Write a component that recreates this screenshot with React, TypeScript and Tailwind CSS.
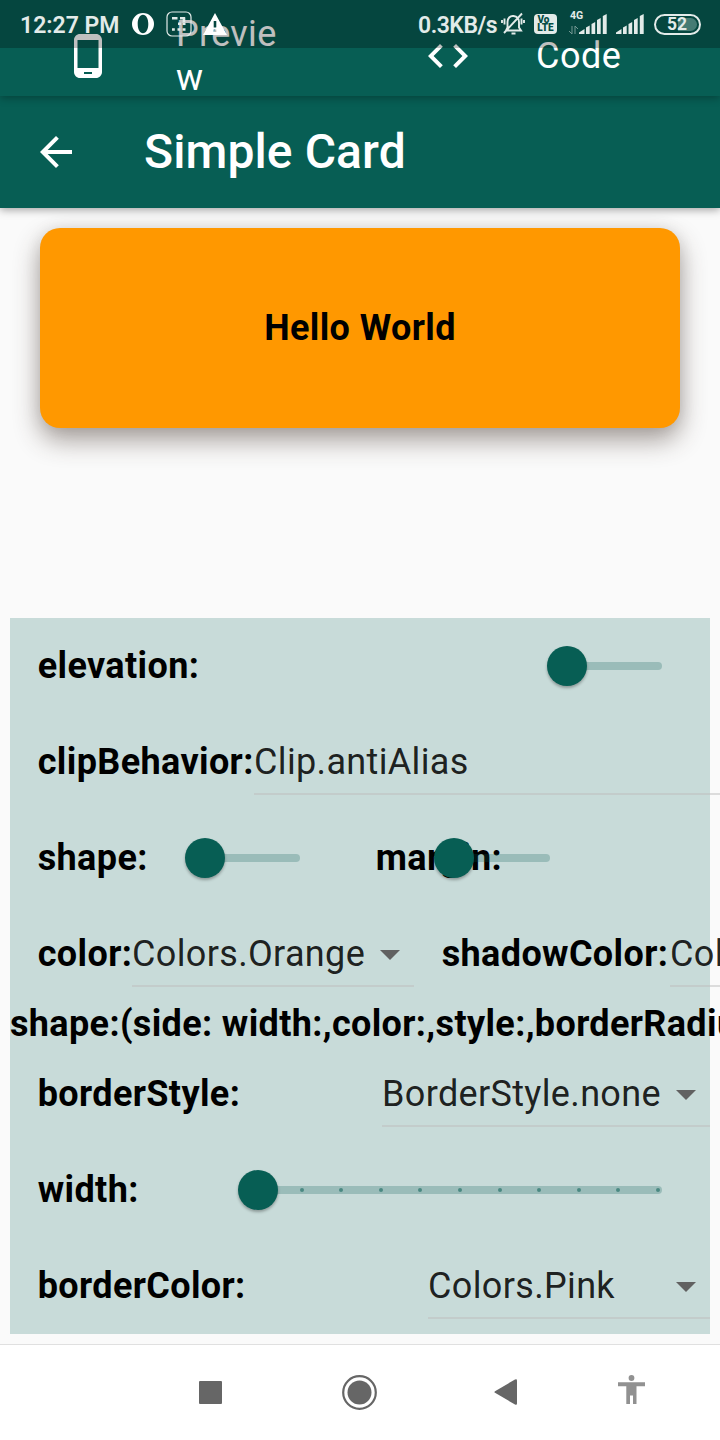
import type { ReactNode } from "react";
import { MdArrowBack, MdArrowDropDown, MdCode, MdPhoneAndroid } from "react-icons/md";

function Label({ children }: { children: ReactNode }) {
  return <span className="-ml-[0.3px] shrink-0 font-bold tracking-[0.38px] text-black">{children}</span>;
}

function Dropdown({ value, className }: { value: string; className: string }) {
  return (
    <div className={`flex h-[66px] shrink-0 items-center justify-between border-b-2 border-[#bdbdbd]/50 pt-0.5 ${className}`}>
      <span className="tracking-[0.35px] text-black/87">{value}</span>
      <MdArrowDropDown className="size-12 shrink-0 text-[#616161]" />
    </div>
  );
}

function Slider({ className, ticks = 0 }: { className: string; ticks?: number }) {
  return (
    <div className={`flex h-10 shrink-0 items-center ${className}`}>
      <div className="z-10 size-10 shrink-0 rounded-full bg-[#075e54] shadow-[0_2px_3px_rgba(0,0,0,0.3)]" />
      <div className="-ml-1 flex h-2 grow items-center justify-between rounded-r-full bg-[#075e54]/24 pl-[25.6px] pr-0.5">
        {Array.from({ length: ticks }, (_, i) => (
          <span key={i} className="size-1 rounded-full bg-[#075e54]/54" />
        ))}
      </div>
    </div>
  );
}

function Row({ children }: { children: ReactNode }) {
  return <div className="flex h-24 items-center pl-7">{children}</div>;
}

function Signal({ className }: { className: string }) {
  return (
    <svg viewBox="0 0 28 20" className={className} fill="currentColor">
      <path d="M0 20v-1.500L5.500 15v5zM7 20v-6.500l3.700-2V20zM12.500 20V10l3.700-2v12zM18 20V6l3.700-2v16zM23.800 20V2L27.700 0v20z" />
    </svg>
  );
}

function StatusBar() {
  return (
    <div className="absolute inset-x-0 top-0 z-30 flex h-12 items-center bg-black/25 pl-5 text-[#e3ebe9]">
      <span className="w-[112px] shrink-0 pt-[3px] text-[23px] leading-none font-semibold">12:27 PM</span>
      <svg viewBox="0 0 22 22" className="size-[22px] shrink-0 text-white" fill="currentColor">
        <path fillRule="evenodd" d="M11 0a11 11 0 1 0 0 22 11 11 0 0 0 0-22zm0 1.800c3.200 0 5.300 4 5.300 9.200s-2.100 9.200-5.300 9.200S5.700 16.200 5.700 11 7.800 1.800 11 1.800z" />
      </svg>
      <svg viewBox="0 0 26 26" className="ml-[12px] size-[26px] shrink-0" fill="none" stroke="currentColor">
        <rect x="1" y="1" width="24" height="24" rx="5" strokeWidth="1.200" />
        <path strokeWidth="2.600" d="M6 7.200h5.500M14 7.200h5.200M18 7v4M12 12.800h2.800M16.500 12.800h3M6 18.500h2.800M11.500 18.500h2.800M16.500 18.500h3" />
      </svg>
      <svg viewBox="0 0 24 22" className="ml-[11px] h-[22px] w-6 shrink-0" fill="white">
        <path fillRule="evenodd" d="M12 0l12 22H0zM10.700 8v6.500h2.600V8zm0 8.500v2.600h2.600v-2.600z" />
      </svg>
      <span className="ml-[191px] w-[83px] shrink-0 pt-[3px] text-[23px] leading-none font-semibold tracking-[-0.5px]">0.3KB/s</span>
      <svg viewBox="0 0 24 24" className="size-6 shrink-0" fill="none" stroke="currentColor" strokeWidth="1.900">
        <path d="M5 18.500h15l-2-3V10c0-3-2-5.500-5.500-6C9 3.500 6.500 6.500 6.500 10v5.500zM10.500 21.500h4M21 1.500L3 21M3.500 6.500v6M1 8v3M20.500 6.500v6M23 8v3" />
      </svg>
      <div className="ml-[9px] flex h-5 w-[23px] shrink-0 flex-col items-center justify-center rounded-[4px] bg-[#e3ebe9] text-[10px] leading-[8.5px] font-black text-[#064d45]">
        <span className="-ml-1">Vo</span>
        <span>LTE</span>
      </div>
      <div className="relative ml-3 h-5 w-[38px] shrink-0">
        <span className="absolute top-[-3px] left-[1px] text-[10.5px] leading-none font-bold">4G</span>
        <svg viewBox="0 0 10 9" className="absolute bottom-0 left-0 h-[9px] w-[10px] opacity-50" fill="none" stroke="currentColor">
          <path d="M3 1v8L0 6M6 9V1l3 3" />
        </svg>
        <Signal className="absolute right-0 bottom-0 h-5 w-7" />
      </div>
      <Signal className="ml-[9px] h-5 w-7 shrink-0" />
      <div className="ml-[10px] flex h-[21px] w-[47px] shrink-0 items-center justify-center rounded-full border-2 p-0.5">
        <div className="flex h-full w-full items-center justify-center rounded-full bg-linear-to-r from-transparent from-50% to-[#467b74] to-50% pt-0.5 pr-px text-[17.5px] leading-none font-bold">
          52
        </div>
      </div>
    </div>
  );
}

export default function App() {
  return (
    <div className="relative flex h-[1440px] w-[720px] flex-col overflow-hidden bg-[#fafafa] font-[Roboto,sans-serif] text-[36px] leading-[42px] whitespace-nowrap">
      <StatusBar />
      <nav className="z-20 flex h-24 shrink-0 items-center bg-[#075e54] pt-4 text-white shadow-[0_2px_8px_rgba(0,0,0,0.3)]">
        <div className="flex w-[424px] items-center pl-16">
          <MdPhoneAndroid className="size-12" />
          <div className="ml-16 w-[104px] leading-[44px] tracking-[0.3px]">
            Previe
            <br />w
          </div>
        </div>
        <MdCode className="size-12" />
        <span className="ml-16 tracking-[0.5px]">Code</span>
      </nav>
      <header className="z-10 flex h-28 shrink-0 items-center bg-[#075e54] pl-8 text-white shadow-[0_2px_8px_rgba(0,0,0,0.35)]">
        <MdArrowBack className="size-12" />
        <h1 className="ml-16 text-[48px] leading-[56px] font-medium tracking-[0.1px]">Simple Card</h1>
      </header>
      <main className="flex grow flex-col px-2.5 pt-5">
        <section className="mx-[30px] flex h-[200px] items-center justify-center rounded-[20px] bg-[#ff9800] font-bold tracking-[0.38px] shadow-[0_12px_26px_rgba(62,46,38,0.45),0_0_16px_rgba(0,0,0,0.08)]">
          Hello World
        </section>
        <section className="mt-[190px] h-[716px] bg-[#c8dbd9]">
          <Row>
            <Label>elevation:</Label>
            <Slider className="mr-12 ml-auto w-[115px]" />
          </Row>
          <Row>
            <div className="w-[216px] shrink-0"><Label>clipBehavior:</Label></div>
            <Dropdown value="Clip.antiAlias" className="w-[560px]" />
          </Row>
          <Row>
            <div className="w-[147px] shrink-0"><Label>shape:</Label></div>
            <Slider className="w-[115px]" />
            <div className="ml-[76px] w-[58px] shrink-0"><Label>margin:</Label></div>
            <Slider className="z-10 w-[116px]" />
          </Row>
          <Row>
            <div className="w-[94px] shrink-0"><Label>color:</Label></div>
            <Dropdown value="Colors.Orange" className="w-[282px]" />
            <div className="ml-7 w-[228px] shrink-0"><Label>shadowColor:</Label></div>
            <Dropdown value="Colors.Brown" className="w-[282px]" />
          </Row>
          <div className="h-11 leading-[44px] font-bold tracking-[0.36px]">shape:(side: width:,color:,style:,borderRadius:)</div>
          <Row>
            <Label>borderStyle:</Label>
            <Dropdown value="BorderStyle.none" className="ml-auto w-[328px]" />
          </Row>
          <Row>
            <Label>width:</Label>
            <Slider className="mr-12 ml-auto w-[424px]" ticks={10} />
          </Row>
          <Row>
            <Label>borderColor:</Label>
            <Dropdown value="Colors.Pink" className="ml-auto w-[282px]" />
          </Row>
        </section>
      </main>
      <footer className="flex h-24 shrink-0 items-center border-t border-[#e0e0e0] bg-white pl-[198.500px] text-[#666666]">
        <div className="mb-px size-[23px] rounded-[1px] bg-[#666666]" />
        <svg viewBox="0 0 36 36" className="ml-[120px] size-9" fill="currentColor">
          <circle cx="17.500" cy="17.500" r="16.300" fill="none" stroke="currentColor" strokeWidth="2.200" />
          <circle cx="17.500" cy="17.500" r="12" />
        </svg>
        <svg viewBox="0 0 23 26" className="mb-px ml-[116px] h-[26px] w-[23px]" fill="currentColor">
          <path d="M1 12.200L21 .5q2-.8 2 1v23q0 1.800-2 1L1 13.800q-1.200-.8 0-1.600z" />
        </svg>
        <svg viewBox="0 0 27 29" className="mb-[6px] ml-[101px] h-[29px] w-[27px] text-[#919191]" fill="currentColor">
          <circle cx="13.500" cy="3" r="2.900" />
          <path d="M0 7.300h27v3.900h-8.500V29H15v-8.500h-3V29H8.300V11.200H0z" />
        </svg>
      </footer>
    </div>
  );
}
